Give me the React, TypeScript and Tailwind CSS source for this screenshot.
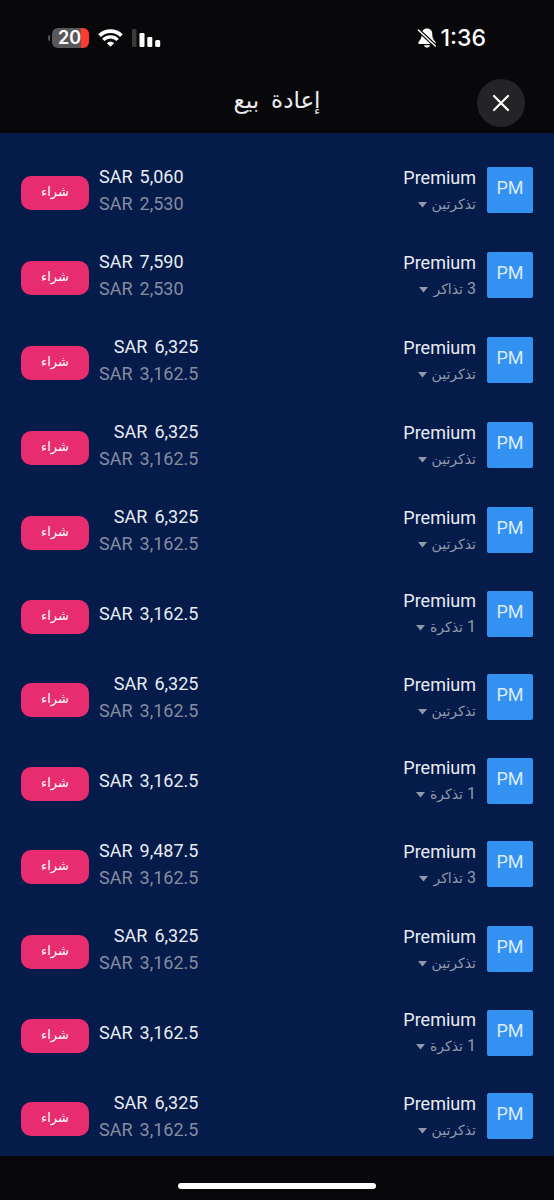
import { useState } from "react";

type Listing = {
    count?: number;
    tickets: string;
    total: string;
    each?: string;
};

const listings: Listing[] = [
    { tickets: "تذكرتين", total: "5,060", each: "2,530" },
    { count: 3, tickets: "تذاكر", total: "7,590", each: "2,530" },
    { tickets: "تذكرتين", total: "6,325", each: "3,162.5" },
    { tickets: "تذكرتين", total: "6,325", each: "3,162.5" },
    { tickets: "تذكرتين", total: "6,325", each: "3,162.5" },
    { count: 1, tickets: "تذكرة", total: "3,162.5" },
    { tickets: "تذكرتين", total: "6,325", each: "3,162.5" },
    { count: 1, tickets: "تذكرة", total: "3,162.5" },
    { count: 3, tickets: "تذاكر", total: "9,487.5", each: "3,162.5" },
    { tickets: "تذكرتين", total: "6,325", each: "3,162.5" },
    { count: 1, tickets: "تذكرة", total: "3,162.5" },
    { tickets: "تذكرتين", total: "6,325", each: "3,162.5" },
];

function StatusBar() {
    return (
        <div className="flex items-center justify-between pt-6 pr-[68px] pl-12">
            <div className="flex items-center gap-1 text-white">
                <span className="font-[Inter,sans-serif] text-[23px] leading-7 font-medium">1:36</span>
                {/* Silent mode bell */}
                <svg width="20" height="20" viewBox="0 0 19 20" fill="none">
                    <path d="M9.500 .5c-3.400 0-5.300 2.400-5.300 5.600 0 4.200-1.200 5.600-2.800 7.400-1.200 1.300-.8 2.500.6 2.500h15c1.400 0 1.800-1.200.6-2.500-1.600-1.800-2.800-3.200-2.800-7.400C14.800 2.900 12.900.5 9.500.5Z" fill="white" />
                    <path d="M6.500 17.300h6c-.3 1.400-1.500 2.300-3 2.300s-2.700-.9-3-2.300Z" fill="white" />
                    <path d="M1 2.200l17 16" stroke="#08080a" strokeWidth="3.800" />
                    <path d="M.8 2l17 16" stroke="white" strokeWidth="1.500" strokeLinecap="round" />
                </svg>
            </div>
            <div className="flex items-center gap-[9px]" dir="ltr">
                <div className="flex items-center">
                    <span className="h-[6px] w-[2px] rounded-l-full bg-[#55555a]" />
                    <span className="ml-[2px] flex h-[20px] w-[37px] items-center justify-center rounded-md bg-linear-to-r from-[#58585b] from-78% to-[#ff3b30] to-78% pr-[2px] font-[Inter,sans-serif] text-lg font-semibold text-white">20</span>
                </div>
                <svg width="25" height="18" viewBox="0 0 25 18" fill="none" stroke="white">
                    <path d="M1.600 6.600C7.600.6 17.400.6 23.400 6.600" strokeWidth="3.800" />
                    <path d="M5.300 10.900c4-4 10.400-4 14.400 0" strokeWidth="3.400" />
                    <path d="M12.500 17.800l-3.600-3.600c2-1.900 5.200-1.900 7.200 0Z" fill="white" stroke="none" />
                </svg>
                <svg width="29" height="18" viewBox="0 0 29 18" fill="white">
                    <rect x="0" y="0" width="4.500" height="18" rx="1.200" fill="#3a3a3c" />
                    <rect x="7.500" y="4" width="5" height="14" rx="1.200" />
                    <rect x="15.300" y="8" width="5" height="10" rx="1.200" />
                    <rect x="23.200" y="11" width="5" height="7" rx="1.500" />
                </svg>
            </div>
        </div>
    );
}

function Price({ amount }: { amount: string }) {
    return (
        <bdi dir="ltr" className="flex gap-[7px]">
            <span>SAR</span> <span>{amount}</span>
        </bdi>
    );
}

function ListingRow({ count, tickets, total, each }: Listing) {
    return (
        <li className="flex items-center">
            <div className="flex size-[46px] shrink-0 items-center justify-center rounded-xs bg-[#3391f1] pb-1 text-lg text-[#dcebfc]">
                PM
            </div>
            <div className="mr-[11px] flex flex-1 flex-col items-start">
                <span className="text-lg leading-[25px] text-[#e8ecf3]">Premium</span>
                <button type="button" className="flex items-center gap-1 pt-[2px] text-sm leading-6 text-[#9198aa]">
                    {count && <span className="text-base leading-6">{count}</span>}
                    <span>{tickets}</span>
                    <svg width="10" height="6" viewBox="0 0 10 6" fill="currentColor" className="mt-[2px]">
                        <path d="M0 0h9L4.500 5.500Z" />
                    </svg>
                </button>
            </div>
            <div className="ml-[10px] flex flex-col items-start text-lg leading-[27px]">
                <div className="text-[#e8ecf3]"><Price amount={total} /></div>
                {each && <div className="text-[#858ca0]"><Price amount={each} /></div>}
            </div>
            <div className="pt-[6px]">
                <button type="button" className="flex h-[34px] w-[68px] items-center justify-center rounded-[10px] bg-[#e82c70] pb-[2px] text-[13px] text-white">
                    شراء
                </button>
            </div>
        </li>
    );
}

export default function App() {
    const [open, setOpen] = useState(true);

    return (
        <div dir="rtl" lang="ar" className="flex min-h-screen flex-col bg-[#08080a] font-[Roboto,'DejaVu_Sans',sans-serif]">
            <header className="pb-[6px]">
                <StatusBar />
                <div className="mt-[27px] grid grid-cols-[48px_1fr_48px] items-center px-[29px]">
                    <button type="button" aria-label="إغلاق" onClick={() => setOpen(false)} className="flex size-12 items-center justify-center rounded-full bg-[#242426]">
                        <svg width="18" height="18" viewBox="0 0 18 18" stroke="white" strokeWidth="2.200" strokeLinecap="round">
                            <path d="M2 2l14 14M16 2L2 16" />
                        </svg>
                    </button>
                    <h1 className="flex justify-center gap-3 pb-1 text-[23px] leading-7 font-medium text-[#ececee]">
                        <span>إعادة</span> <span>بيع</span>
                    </h1>
                </div>
            </header>
            <main className="flex-1 bg-[#051b49] px-[21px] pt-[30px] pb-3">
                {open && (
                    <ul className="flex flex-col gap-[31px]">
                        {listings.map((listing, i) => (
                            <ListingRow key={i} {...listing} />
                        ))}
                    </ul>
                )}
            </main>
            <footer className="flex justify-center pt-[27px] pb-[11px]">
                <span className="h-[6px] w-[198px] rounded-full bg-white" />
            </footer>
        </div>
    );
}
